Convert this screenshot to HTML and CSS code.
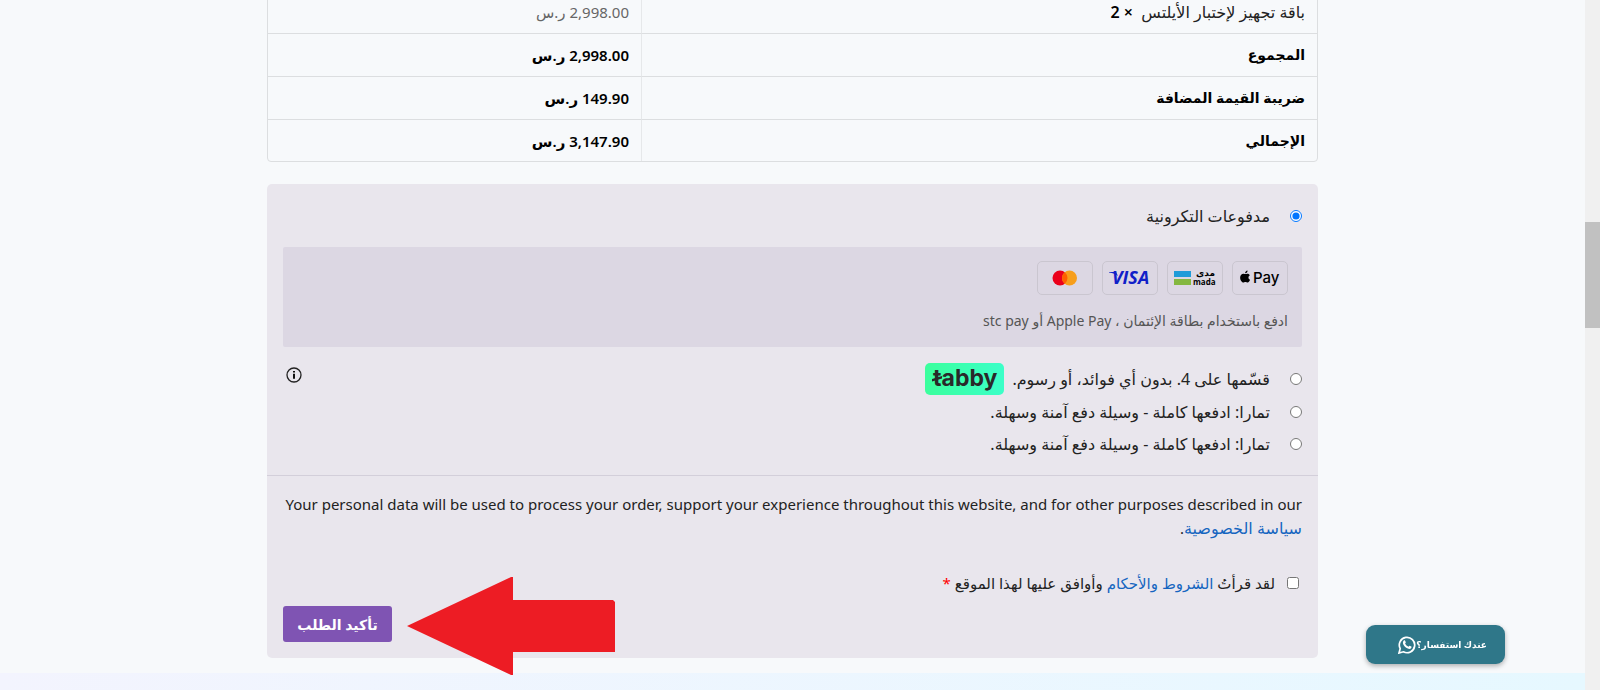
FILE: index.html
```html
<!DOCTYPE html>
<html lang="ar" dir="rtl">
<head>
    <meta charset="UTF-8">
    <title>إتمام الطلب</title>
    <link rel="stylesheet" href="styles.css">
</head>
<body>
    <div class="scroll-track"><div class="scroll-thumb"></div></div>

    <div class="page">
        <main class="checkout">
            <table class="order-table">
                <tbody>
                    <tr>
                        <td class="product">باقة تجهيز لإختبار الأيلتس &nbsp;<strong>× 2</strong></td>
                        <td class="price">2,998.00 ر.س</td>
                    </tr>
                </tbody>
                <tfoot>
                    <tr>
                        <th scope="row">المجموع</th>
                        <td>2,998.00 ر.س</td>
                    </tr>
                    <tr>
                        <th scope="row">ضريبة القيمة المضافة</th>
                        <td>149.90 ر.س</td>
                    </tr>
                    <tr>
                        <th scope="row">الإجمالي</th>
                        <td>3,147.90 ر.س</td>
                    </tr>
                </tfoot>
            </table>

            <form class="payment">
                <div class="methods">
                    <div class="method">
                        <input type="radio" name="payment_method" id="pay_card" checked>
                        <label for="pay_card">مدفوعات التكرونية</label>
                    </div>

                    <div class="payment-box">
                        <div class="cards">
                            <span class="card">
                                <svg viewBox="0 0 54 32" role="img" aria-label="Apple Pay">
                                    <g transform="translate(0 3) scale(.83)">
                                        <path d="M15.100 10.900c-.8 0-1.500-.5-2.600-.4-1.900.2-3.900 1.700-3.900 4.700 0 3.200 2.100 6 3.800 6 1 0 1.400-.6 2.600-.6s1.500.6 2.500.6c1.500 0 2.600-2.100 3-3.400-2.500-1.200-2.500-4.300-.2-5.600-1.100-1.600-2.500-1.700-3.200-1.600-.8.1-1.400.3-2 .3z"/>
                                        <path d="M14.600 9.900c-.1-1.700 1.300-3.200 2.900-3.400.2 1.800-1.200 3.400-2.900 3.400z"/>
                                    </g>
                                    <text x="20" y="21" class="logo-pay">Pay</text>
                                </svg>
                            </span>
                            <span class="card">
                                <svg viewBox="0 0 54 32" role="img" aria-label="mada">
                                    <rect x="6" y="9" width="17" height="6" fill="#1f9bd8"/>
                                    <rect x="6" y="17" width="17" height="6" fill="#84b740"/>
                                    <text x="47" y="14" class="logo-mada-ar">مدى</text>
                                    <text x="25" y="23" class="logo-mada">mada</text>
                                </svg>
                            </span>
                            <span class="card">
                                <svg viewBox="0 0 54 32" role="img" aria-label="Visa">
                                    <text x="9" y="22" class="logo-visa">VISA</text>
                                    <path d="M6 10h7l2 4c-2-2-5-3-9-3.500z" fill="#1020c8"/>
                                </svg>
                            </span>
                            <span class="card">
                                <svg viewBox="0 0 54 32" role="img" aria-label="Mastercard">
                                    <circle cx="22" cy="16" r="7.500" fill="#eb001b"/>
                                    <circle cx="31.500" cy="16" r="7.500" fill="#f79e1b"/>
                                    <path d="M26.750 10.200a7.500 7.500 0 0 1 0 11.600a7.500 7.500 0 0 1 0-11.600z" fill="#ff5f00"/>
                                </svg>
                            </span>
                        </div>
                        <p>ادفع باستخدام بطاقة الإئتمان ، Apple Pay أو stc pay</p>
                    </div>

                    <div class="method method-tabby">
                        <input type="radio" name="payment_method" id="pay_tabby">
                        <label for="pay_tabby">قسّمها على 4. بدون أي فوائد، أو رسوم.</label>
                        <span class="tabby">
                            <svg viewBox="0 0 79 32" role="img" aria-label="tabby">
                                <text x="8" y="23" class="logo-tabby">tabby</text>
                                <path d="M7 16l10-3v2.500l-10 3z" fill="#292929"/>
                            </svg>
                        </span>
                        <button type="button" class="info" aria-label="معلومات">
                            <svg viewBox="0 0 16 16">
                                <circle cx="8" cy="8" r="7" fill="none" stroke="#222" stroke-width="1.300"/>
                                <path d="M8 6.800v5M8 4v1.500" stroke="#111" stroke-width="2"/>
                            </svg>
                        </button>
                    </div>
                    <div class="method">
                        <input type="radio" name="payment_method" id="pay_tamara">
                        <label for="pay_tamara">تمارا: ادفعها كاملة - وسيلة دفع آمنة وسهلة.</label>
                    </div>
                    <div class="method">
                        <input type="radio" name="payment_method" id="pay_tamara_later">
                        <label for="pay_tamara_later">تمارا: ادفعها كاملة - وسيلة دفع آمنة وسهلة.</label>
                    </div>
                </div>

                <div class="place-order">
                    <p class="privacy">Your personal data will be used to process your order, support your experience throughout this website, and for other purposes described in our <a href="#">سياسة الخصوصية</a>.</p>
                    <div class="terms">
                        <input type="checkbox" id="terms">
                        <label for="terms">لقد قرأتُ <a href="#">الشروط والأحكام</a> وأوافق عليها لهذا الموقع <span class="required">*</span></label>
                    </div>
                    <div class="submit-row">
                        <button type="submit" class="submit">تأكيد الطلب</button>
                    </div>
                </div>

                <svg class="pointer" viewBox="0 0 208 98" aria-hidden="true">
                    <path d="M0 49L104 0h2v23h100l2 2v50H106v23h-2z" fill="#ed1c24"/>
                </svg>
            </form>
        </main>
        <footer class="footer"></footer>
    </div>

    <a href="#" class="chat">
        <span>عندك استفسار؟</span>
        <svg viewBox="0 0 18 18">
            <path d="M1 17l1.200-4.400A7.700 7.700 0 1 1 5.400 15.800z" fill="none" stroke="#fff" stroke-width="1.700"/>
            <path d="M5.800 4.500c.5-.5 1-.4 1.200 0l.8 1.700c.1.400-.6 1-.7 1.300.7 1.500 1.800 2.500 3.300 3.200.4-.1.900-1 1.200-.9l1.700.8c.5.300.1 1.500-.5 1.900-1.200.8-3 .3-4.600-.7C6.500 10.700 5 8.700 4.900 7c0-1 .3-1.900.9-2.500z" fill="#fff"/>
        </svg>
    </a>
</body>
</html>
```
FILE: styles.css
```css
* {
    box-sizing: border-box;
}

body {
    margin: 0;
    display: flex;
    flex-direction: row;
    min-height: 100vh;
    overflow: hidden;
    background-color: #f7f9fb;
    color: #222;
    font-family: "Noto Sans", "DejaVu Sans", sans-serif;
    font-size: 15px;
    line-height: 24px;
}

p {
    margin: 0;
}

a {
    color: #1565c0;
    text-decoration: none;
}

input[type="radio"],
input[type="checkbox"] {
    width: 12px;
    height: 12px;
    margin: 0;
    flex: none;
}

/* scrollbar */
.scroll-track {
    flex: none;
    width: 15px;
    background-color: #f0f0f0;
}

.scroll-thumb {
    height: 106px;
    margin-top: 222px;
    background-color: #c1c1c1;
}

.page {
    flex: 1;
    display: flex;
    flex-direction: column;
    height: 100vh;
}

.checkout {
    flex: none;
    width: 100%;
    max-width: 1051px;
    margin: -10px auto 15px;
}

/* order review */
.order-table {
    width: 100%;
    border: 1px solid #dcdee0;
    border-radius: 4px;
    border-spacing: 0;
    table-layout: fixed;
}

.order-table th,
.order-table td {
    height: 43px;
    padding: 0 12px;
    text-align: right;
    border-bottom: 1px solid #dcdee0;
    color: #000;
}

.order-table th:first-child,
.order-table td:first-child {
    width: 676px;
    border-left: 1px solid #e6e8ea;
}

.order-table tfoot th {
    font-size: 14px;
}

.order-table tfoot tr:last-child > * {
    height: 41px;
    border-bottom: 0;
}

.order-table tbody .product {
    color: #222;
    font-size: 16px;
}

.order-table tbody .price {
    color: #666;
}

.order-table tfoot th,
.order-table tfoot td,
.order-table strong {
    font-weight: 600;
    color: #000;
}

/* payment */
.payment {
    position: relative;
    margin-top: 22px;
    background-color: #e9e6ed;
    border-radius: 5px;
}

.methods {
    padding: 16px 16px 15px;
    border-bottom: 1px solid #d3cfda;
}

.method {
    display: flex;
    align-items: center;
    gap: 20px;
    height: 32px;
    font-size: 16px;
}

.method-tabby {
    height: 34px;
}

.payment-box {
    margin: 15px 0;
    padding: 14px;
    background-color: #dcd7e3;
    border-radius: 2px;
    color: #555;
    font-size: 14px;
}

.cards {
    display: flex;
    gap: 9px;
    margin-bottom: 14px;
}

.card {
    width: 56px;
    height: 34px;
    border: 1px solid #cac6d0;
    border-radius: 5px;
}

.card svg,
.tabby svg {
    display: block;
}

.logo-pay {
    direction: ltr;
    font: 500 15px "Inter", sans-serif;
}

.logo-mada {
    direction: ltr;
    font: 700 8px "Open Sans", sans-serif;
}

.logo-mada-ar {
    direction: rtl;
    font: 700 9px "DejaVu Sans", sans-serif;
}

.logo-visa {
    direction: ltr;
    font: italic 700 18px "Open Sans", sans-serif;
    fill: #1020c8;
}

.tabby {
    width: 79px;
    height: 32px;
    margin-right: -12px;
    border-radius: 5px;
    background: linear-gradient(90deg, #3bff9d, #3bffc8);
}

.logo-tabby {
    direction: ltr;
    font: 700 23px "Inter", sans-serif;
    fill: #292929;
}

.info {
    width: 16px;
    height: 16px;
    margin: 0 auto 8px 3px;
    padding: 0;
    border: 0;
    background: none;
}

.info svg {
    display: block;
}

/* place order */
.place-order {
    padding: 16px;
}

.privacy a {
    font-size: 16px;
}

.terms {
    display: flex;
    align-items: center;
    gap: 12px;
    margin-top: 31px;
    padding-right: 3px;
}

.required {
    color: #f00;
}

.submit-row {
    display: flex;
    justify-content: flex-end;
    margin-top: 11px;
}

.submit {
    width: 109px;
    height: 36px;
    padding: 0;
    border: 0;
    border-radius: 3px;
    background-color: #7f54b3;
    color: #fff;
    font: 600 14px "Noto Sans", "DejaVu Sans", sans-serif;
}

.pointer {
    position: absolute;
    left: 140px;
    bottom: -17px;
    width: 208px;
    height: 98px;
}

.footer {
    flex: 1;
    background: linear-gradient(90deg, #f3f4fe, #e6f8ff);
}

/* floating chat button */
.chat {
    position: fixed;
    right: 95px;
    bottom: 26px;
    display: flex;
    align-items: center;
    width: 139px;
    height: 39px;
    padding-right: 18px;
    border-radius: 9px;
    background-color: #2f7789;
    box-shadow: 0 2px 5px rgba(0, 0, 0, 0.3);
    color: #fff;
    font-size: 9px;
    font-weight: 600;
}

.chat svg {
    width: 18px;
    height: 18px;
}
```
